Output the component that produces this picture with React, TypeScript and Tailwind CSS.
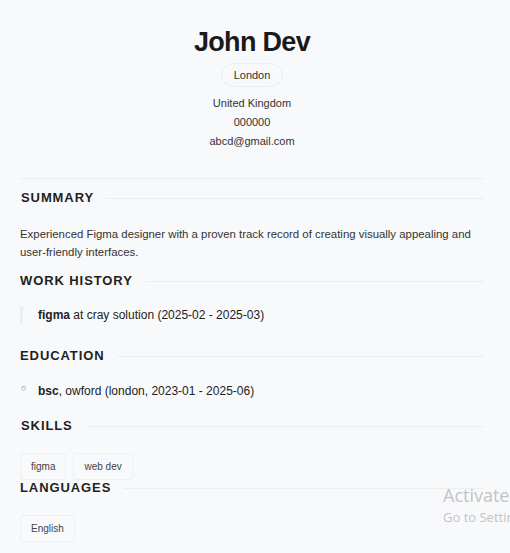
import React from 'react'

const font = { fontFamily: '"Liberation Sans", Arial, sans-serif' }

function SectionTitle({ title }: { title: string }) {
  return (
    <div className="flex items-center gap-3">
      <h2 className="text-[13px] font-bold tracking-[0.07em] text-[#1f1f1f] uppercase leading-[18px]">{title}</h2>
      <div className="flex-1 h-px bg-[#eceef1]" />
    </div>
  )
}

function Tag({ children }: { children: React.ReactNode }) {
  return (
    <span className="inline-block border border-[#eeeff1] bg-[#f8f9fa] rounded-[3px] px-[10px] py-[6px] text-[10px] leading-[13px] text-[#444]">
      {children}
    </span>
  )
}

export default function App() {
  return (
    <div className="relative min-h-[553px] bg-[#f8f9fb] overflow-hidden" style={font}>
      <div className="pl-5 pr-[26px] pt-[27px]">
        <header className="flex flex-col items-center text-[#333]">
          <h1 className="text-[27px] font-bold leading-[30px] tracking-[-0.025em] text-[#1a1a1a]">John Dev</h1>
          <span className="mt-[6px] border border-[#eceef1] rounded-full px-[12px] py-[4px] text-[11px] leading-[14px] text-[#333]">
            London
          </span>
          <p className="mt-[7px] text-[11px] leading-[19px]">United Kingdom</p>
          <p className="text-[11px] leading-[19px]">000000</p>
          <p className="text-[11px] leading-[19px]">abcd@gmail.com</p>
        </header>

        <div className="mt-[27px] h-px bg-[#eceef1]" />

        <section className="mt-[10px]">
          <div className="pl-px"><SectionTitle title="Summary" /></div>
          <p className="mt-[18px] text-[11.4px] leading-[18px] text-[#333]">
            Experienced Figma designer with a proven track record of creating visually appealing and user-friendly interfaces.
          </p>
        </section>

        <section className="mt-[11px]">
          <SectionTitle title="Work History" />
          <div className="mt-[16px] border-l-[3px] border-[#eceef1] pl-[15px] py-[1px]">
            <p className="text-[12px] leading-[16px] text-[#222]">
              <b>figma</b> at cray solution (2025-02 - 2025-03)
            </p>
          </div>
        </section>

        <section className="mt-[23px]">
          <SectionTitle title="Education" />
          <ul className="mt-[18px] flex flex-col">
            <li className="flex text-[12px] leading-[16px] text-[#222]">
              <span className="w-[18px] pl-[1px] text-[9px] leading-[10px] text-[#777]">○</span>
              <span><b>bsc</b>, owford (london, 2023-01 - 2025-06)</span>
            </li>
          </ul>
        </section>

        <section className="mt-[18px]">
          <div className="pl-px"><SectionTitle title="Skills" /></div>
          <div className="mt-[18px] flex gap-[7px]">
            <Tag>figma</Tag>
            <Tag>web dev</Tag>
          </div>
        </section>

        <section className="-mt-px">
          <SectionTitle title="Languages" />
          <div className="mt-[18px] flex gap-[7px]">
            <Tag>English</Tag>
          </div>
        </section>
      </div>

      <div className="pointer-events-none absolute left-[443px] top-[483px] whitespace-nowrap text-[#c3c4c6]" style={{ fontFamily: '"Open Sans", "Noto Sans", sans-serif' }}>
        <p className="text-[18px] leading-[24px]">Activate Windows</p>
        <p className="text-[13px] leading-[20px]">Go to Settings to activate Windows.</p>
      </div>
    </div>
  )
}
